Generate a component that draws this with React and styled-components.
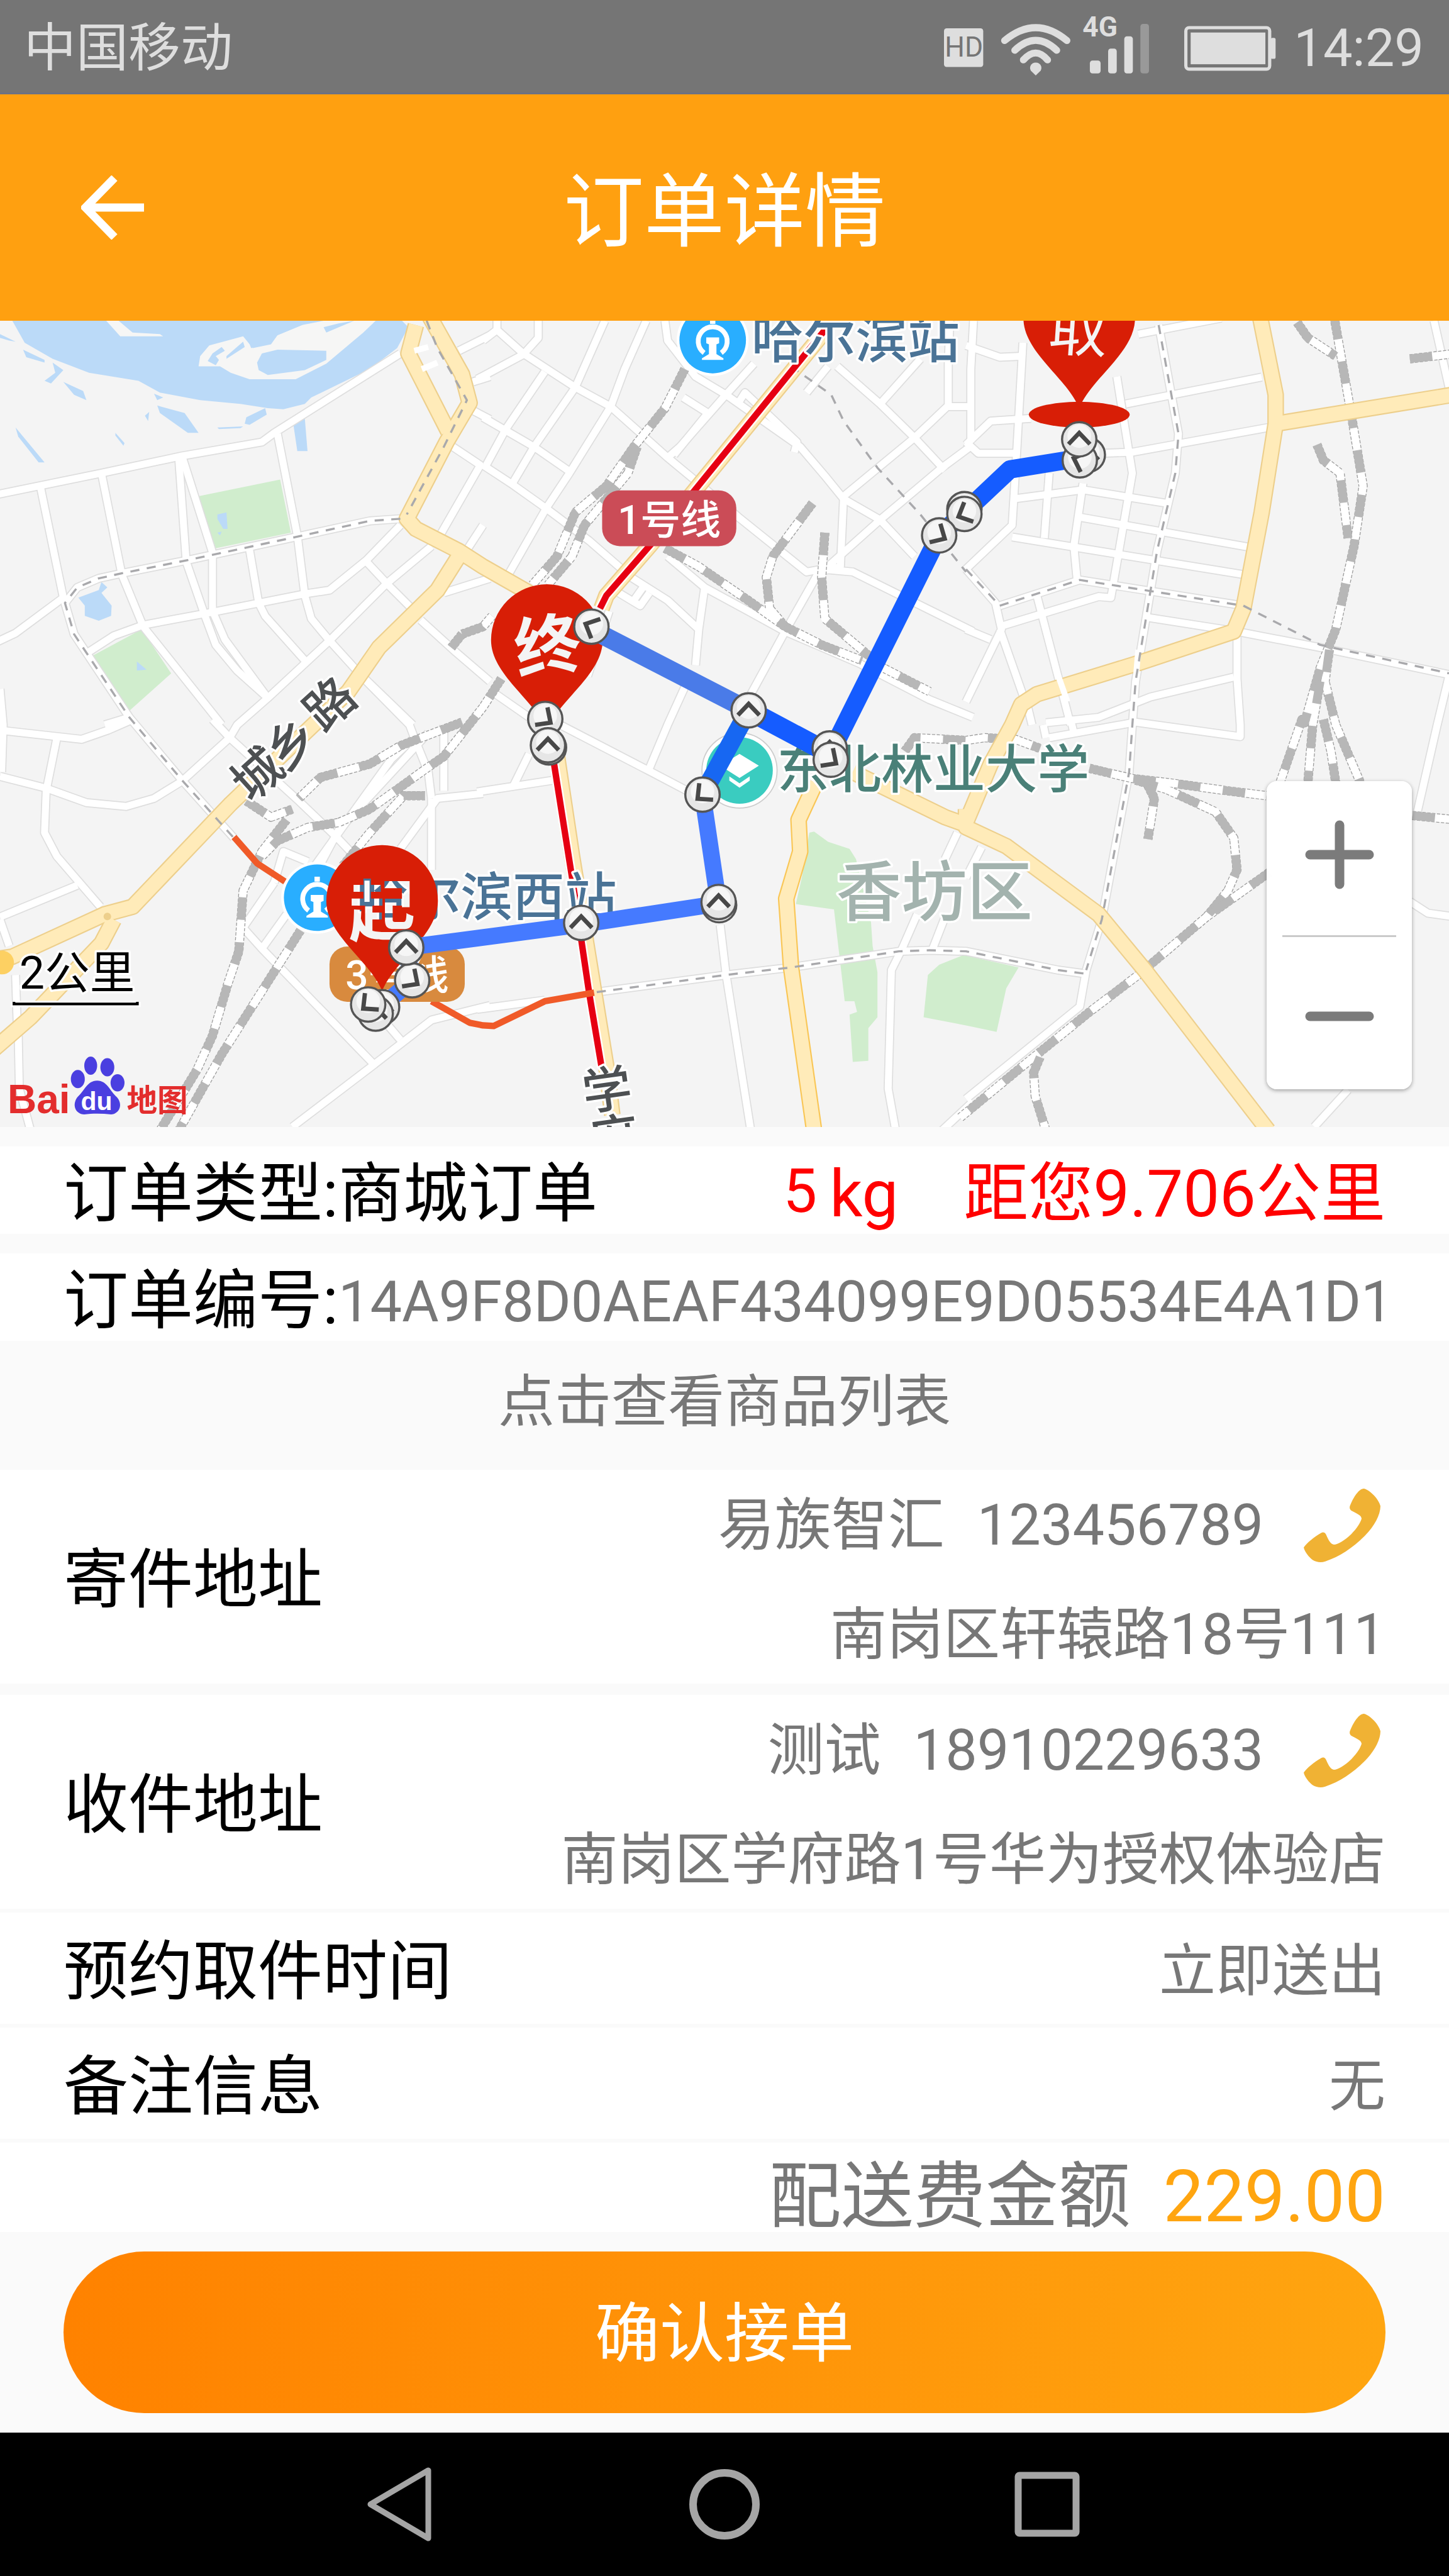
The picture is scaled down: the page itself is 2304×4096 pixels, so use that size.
import React, { useState } from "react";
import styled, { createGlobalStyle } from "styled-components";

const GlobalStyle = createGlobalStyle`
  *, *::before, *::after { box-sizing: border-box; }
  html, body { margin: 0; padding: 0; background: #000; }
  body { font-family: Roboto, "Noto Sans CJK SC", sans-serif; color: #000; }
  button { font: inherit; color: inherit; border: 0; padding: 0; background: none; cursor: pointer; }
  a { color: inherit; text-decoration: none; }
  p, h1, h2, dl, dt, dd { margin: 0; font-weight: 400; }
`;

const Screen = styled.div`
  display: flex;
  flex-direction: column;
  width: 100%;
  min-height: 100vh;
  background: #fafafa;
`;

/* ---------- status bar ---------- */

const StatusBar = styled.div`
  display: flex;
  align-items: center;
  justify-content: space-between;
  height: 150px;
  padding: 6px 40px 0 38px;
  background: #757575;
  border-bottom: 3px solid #6d7182;
  color: #dedede;
  font-size: 83px;
  line-height: 150px;
`;

const StatusIcons = styled.div`
  display: flex;
  align-items: center;
  svg { display: block; height: 147px; }
`;

const Clock = styled.span`
  margin-left: 28px;
`;

/* ---------- header ---------- */

const Header = styled.header`
  display: grid;
  grid-template-columns: 1fr auto 1fr;
  align-items: center;
  height: 360px;
  padding: 0 101px;
  background: #ffa010;
  color: #fff;
`;

const BackButton = styled.button`
  display: flex;
  justify-self: start;
  padding: 28px;
  svg { display: block; width: 100px; height: 102px; }
`;

const Title = styled.h1`
  padding-top: 16px;
  font-size: 128px;
  line-height: 150px;
`;

/* ---------- map ---------- */

const MapBox = styled.section`
  position: relative;
  overflow: hidden;
  background: #f4f4f4;
  > svg { display: block; width: 100%; height: auto; }
`;

const ZoomPanel = styled.div`
  position: absolute;
  right: 59px;
  bottom: 60px;
  display: flex;
  flex-direction: column;
  width: 231px;
  padding: 0 25px;
  border-radius: 16px;
  background: rgba(255, 255, 255, 0.98);
  box-shadow: 0 2px 6px rgba(0, 0, 0, 0.35);
`;

const ZoomButton = styled.button`
  display: flex;
  align-items: center;
  justify-content: center;
  height: 245px;
  padding-bottom: 10px;
  & + & {
    padding: 10px 0 0;
    border-top: 3px solid #cacaca;
  }
  svg { display: block; width: 110px; height: 110px; }
`;

/* ---------- order rows ---------- */

const Summary = styled.dl`
  display: flex;
  align-items: center;
  height: 139px;
  margin-top: 31px;
  padding: 12px 101px 0;
  background: #fff;
  font-size: 103px;
  line-height: 139px;
  white-space: nowrap;
`;

const OrderNumber = styled.dd`
  flex: 1;
  padding-top: 4px;
  text-align: right;
  font-size: 90px;
  color: #777;
`;

const Measures = styled.div`
  display: flex;
  align-items: center;
  margin-left: auto;
  color: #f00;
`;

const Weight = styled.span`
  display: flex;
  align-items: flex-start;
  gap: 20px;
  margin-right: 104px;
`;

const Kilos = styled.span`
  font-size: 96px;
  line-height: 130px;
`;

const ProductsButton = styled.button`
  height: 205px;
  padding-bottom: 8px;
  font-size: 90px;
  line-height: 120px;
  color: #777;
`;

const Row = styled.section`
  display: flex;
  align-items: center;
  justify-content: space-between;
  height: ${(p) => p.$height}px;
  margin-bottom: ${(p) => p.$gap}px;
  padding: 12px 101px 0;
  background: #fff;
`;

const Label = styled.h2`
  font-size: 103px;
  line-height: 139px;
`;

const Value = styled.p`
  font-size: 90px;
  line-height: 120px;
  color: #777;
`;

const Contact = styled.div`
  display: flex;
  flex-direction: column;
  align-items: flex-end;
  gap: 54px;
`;

const Person = styled.div`
  display: flex;
  align-items: center;
`;

const PhoneNumber = styled(Value)`
  margin: 0 64px 0 52px;
`;

const CallLink = styled.a`
  display: block;
  margin-right: 8px;
  svg { display: block; width: 122px; height: 118px; }
`;

const Fee = styled.section`
  display: flex;
  align-items: flex-end;
  justify-content: flex-end;
  gap: 52px;
  height: 142px;
  padding: 0 101px;
  background: #fff;
  color: #777;
  font-size: 115px;
  line-height: 112px;
`;

const Amount = styled.strong`
  font-weight: 400;
  color: #ffa510;
`;

const Footer = styled.footer`
  padding: 31px 101px;
`;

const ConfirmButton = styled.button`
  display: block;
  width: 100%;
  height: 257px;
  padding-top: 6px;
  border-radius: 129px;
  background: linear-gradient(90deg, #ff8200, #ffa510);
  color: #fff;
  font-size: 103px;
  line-height: 139px;
`;

/* ---------- navigation bar ---------- */

const NavBar = styled.nav`
  display: flex;
  flex: 1;
  align-items: center;
  justify-content: center;
  gap: 393px;
  min-height: 229px;
  background: #000;
`;

const NavButton = styled.button`
  display: block;
  svg { display: block; width: 120px; height: 120px; }
`;

/* ---------- map data ---------- */

const SHEETS = {
  A: [0, 590, 0.574, 0.4847],
  B: [900, 590, 0.574, 0.4847],
  C: [1800, 590, 0.574, 0.4847],
  D: [0, 1340, 0.574, 0.4911],
  E: [900, 1340, 0.574, 0.4911],
  F: [1800, 1340, 0.574, 0.4911],
};

function trace(source) {
  let sheet = SHEETS.A;
  const points = [];
  source.split(/\s+/).forEach((token) => {
    if (SHEETS[token]) {
      sheet = SHEETS[token];
      return;
    }
    const [x, y] = token.split(",").map(Number);
    points.push([Math.round(sheet[0] + x * sheet[2]), Math.round(sheet[1] + y * sheet[3])]);
  });
  return points.map((p) => p.join(",")).join(" ");
}

const STREETS = [
  "A -20,684 330,600 590,535 850,480 890,445 1300,140",
  "A 130,650 205,1080 50,1215 -20,1255",
  "A 330,600 395,990 465,1190 720,1568",
  "A 580,540 605,940 665,1150 700,1260 770,1360 870,1465",
  "A 592,540 690,905 690,1130 730,1240 870,1465",
  "A 900,450 965,840 990,1070 1010,1160 1070,1245 1190,1400 1330,1568 D 1345,70 1390,200 1400,300",
  "A 810,895 840,1100 860,1150 990,1320",
  "A 285,1290 370,1225 465,1185 690,1135 990,1065 1070,1050 1190,935 1300,800",
  "A 1400,880 1255,1025 1070,1245 870,1465 770,1568 D 745,70 590,235 500,300 410,330 280,315 150,260 0,215",
  "A 1430,835 1560,570 1470,500",
  "A 1185,935 1260,1030 1340,1125",
  "A 1365,1165 1480,1290 1590,1400",
  "A 1185,1390 1340,1568",
  "A 1520,890 1568,800",
  "A 1440,1060 1590,1005",
  "A 1490,130 1590,70",
  "A 1535,250 1590,230",
  "A 1535,360 1590,395",
  "A 340,1568 420,1540",
  "A 0,1430 10,1568 D 5,200",
  "D 690,0 745,70 970,310 1100,455 1160,530",
  "D 185,70 150,270 145,430 185,520 325,710",
  "D 0,40 265,75 350,40 430,0",
  "D 0,750 250,630",
  "D 0,760 30,860",
  "D 50,970 55,1150",
  "D 60,1200 62,1400 100,1560",
  "D 1390,50 1100,420 1040,550",
  "D 1345,70 1270,150 970,640",
  "D 1568,280 1420,300 1300,490",
  "D 1400,300 1400,570",
  "D 1440,20 1440,270",
  "D 890,620 920,500 1000,540",
  "D 890,620 790,790 850,870 1215,1310 950,1545",
  "D 850,870 930,740",
  "D 1215,1310 1400,1140 1590,1085",
  "D 1300,1215 1260,1160",
  "B 45,15 45,50 130,140 300,270 415,345 600,540 700,640 830,770 1050,980 1100,970 1200,980 1590,1210",
  "B -20,240 130,145 180,80 180,15",
  "B 45,50 0,90",
  "B 530,15 460,200 415,345 280,600 205,735 85,985",
  "B 395,15 300,270 165,500 90,650",
  "B 200,210 75,430 10,570",
  "B 0,385 165,500 290,600",
  "B 0,570 90,640 210,740 345,860 480,1000 600,1090 700,1200",
  "B 590,15 600,90 690,230 790,300 1030,500 1110,610 1170,700 1290,780 1400,920",
  "B 880,180 780,310 640,500 600,540",
  "B 650,310 730,370 620,530",
  "B 830,330 850,290 1020,480 1010,520",
  "B 1150,190 1290,335 1400,465 1500,590",
  "B 1420,160 1290,335",
  "B 1120,190 1050,290",
  "B 1515,15 1510,180 1510,340 1400,465 1170,690 1160,960 1090,980 980,1210 870,1450",
  "B 1590,345 1510,345",
  "B 1590,490 1490,580 1290,780 1110,970",
  "B 720,1040 700,1200 690,1340",
  "B 660,1410 600,1568 E 540,185",
  "B 440,1060 510,1110 540,1060",
  "B 490,1090 520,1040",
  "B 980,1210 860,1130 720,1040 600,920",
  "B 980,1210 1220,1330 1450,1470 1590,1540",
  "B 30,1440 150,1540",
  "B 410,1130 340,1380",
  "C 25,15 15,200 15,480",
  "C 185,100 165,500 150,800 0,970",
  "C 0,110 110,155 190,150",
  "C 0,490 80,400 210,390",
  "C 0,480 40,525 160,525",
  "C 560,65 830,5",
  "C 520,335 960,232",
  "C 440,525 540,520 980,425",
  "C 490,230 540,600 470,1080 430,1075 110,1190",
  "C 155,700 380,665 650,715",
  "C 380,640 350,880 360,1010",
  "C 270,600 255,850",
  "C 370,770 920,885",
  "C 150,845 900,990",
  "C 590,1155 880,1210 1150,1270 1590,1380",
  "C 230,1070 340,1568",
  "C 110,1200 190,1470",
  "C 0,970 95,1100 115,1200 0,1480",
  "C 0,1200 80,1240",
  "C 880,1230 880,1390 890,1568 F 890,65 550,10 270,70",
  "C 870,1385 600,1460 430,1540 260,1560",
  "C 200,1500 215,1568",
  "C 1520,15 1568,270",
  "C 1568,1380 1530,1568 F 1465,350",
  "F 250,20 260,70",
  "F 340,0 350,50",
  "F 390,950 370,1090 0,1440",
  "F 1440,690 1500,735 1590,750",
  "F 1240,1405 1130,1545",
  "F 50,485 0,600",
  "E 770,780 790,970 870,1560",
  "E -20,275 230,230",
  "E 250,20 540,195 680,280",
  "E 150,130 100,250",
  "E -20,1100 200,1065",
  "E 1540,430 1500,530",
  "E 1410,740 1360,870 1325,950 1315,1400 1340,1560",
  "E 1500,750 1460,870",
  "E 1490,1560 1590,1450",
];

// Streets carrying a line that is still under construction.
const PLANNED = [
  "A 1300,775 1200,785 960,845 610,935 400,985 320,1005 250,1040 210,1100 240,1220 420,1540 D 590,230 760,450",
  "E 370,1035 790,970 1000,940 1350,880 1450,875 1568,880 F 0,880 300,950 390,965",
  "C 625,30 690,450 680,600 620,900 550,1400 540,1568 F 530,200 440,760 390,950",
  "C 110,1110 370,1010 900,1110",
];

const PLANNED_OVERLAY = [
  "A 1385,15 1420,120 1515,320 1440,500 1320,760",
  "B 1000,190 1130,300 1170,400 1280,580 1420,760 1568,980",
  "C 0,970 110,1110",
  "C 900,1110 1150,1260 1568,1370",
];

const AVENUES = [
  "A 1350,30 1325,140 1455,440",
  "A 1395,0 1500,220 1525,330 1450,480 1320,775 1350,815 1490,900 1568,960 B 150,1060",
  "A 1500,900 1420,1050 1230,1270 1130,1440 D 990,50 750,320 430,710 340,740 40,900 -20,910",
  "D 370,760 330,850 100,1130 -20,1250",
  "C 955,0 1005,300 1005,410 960,750 900,1120 870,1210 560,1330 230,1450 180,1490 150,1568 F 80,170 0,390",
  "C 1005,410 1590,298",
  "E 1200,200 1500,370 1568,400 F 0,410 130,480 430,740 580,950 980,1560",
  "E 1568,400 1568,340",
  "B 1120,40 540,880 400,1070 385,1120",
  "E 235,100 290,520 400,1320 420,1500",
];

const BRIGHT_AVENUES = ["E 1080,240 1025,380 1030,500 985,680 1000,940 1075,1560"];

const RAILWAYS = [
  "B 655,200 590,350 490,500 400,650 300,750 240,920 160,1030",
  "B 500,500 470,600 330,800 290,920 210,1030",
  "B 590,890 700,960 860,1090 980,1190 1100,1260 1230,1320",
  "B 1070,715 940,920 920,1000 930,1120 980,1190",
  "B 1110,830 1100,1000 1110,1160 1300,1350 1450,1440",
  "B 60,1390 0,1500 D 1440,140 1380,190 1200,340 1100,390 1000,410 900,460 850,520",
  "A 1500,1220 1568,1190 B 30,1150",
  "A 1500,1220 1465,1270",
  "D 800,310 880,370 950,340",
  "D 1500,10 1300,100 1200,170 1040,220 970,300",
  "D 930,380 850,500 790,650 775,880 740,1000 690,1200 640,1330 520,1560",
  "D 1380,290 1310,290 1200,430 1110,560",
  "D 975,800 830,1070 720,1270 580,1560",
  "C 1075,20 1110,80 1200,150",
  "C 1195,0 1225,200 1255,400 1290,650 1260,880 1200,1200 1150,1350 1100,1560 F 1090,0 1020,240",
  "C 1140,490 1160,550 1215,600 1240,850",
  "C 1180,1280 1165,1400 1200,1568 F 1280,240",
  "C 1150,1400 1125,1568 F 1110,240",
  "F 1160,0 1185,120 1200,240",
  "C 1440,160 1590,140",
  "E 1370,120 1400,70 1568,80 F 60,70 160,75 240,110",
  "F 400,185 540,225 660,240 850,270 975,290",
  "F 550,230 650,265 810,350 870,450 880,570 850,650 780,750",
  "F 590,250 612,300 590,455",
  "F 1450,365 1590,380",
  "F 985,580 780,750 560,970 400,1110 180,1320 -20,1510",
  "F 240,1280 220,1340 225,1430 260,1560",
];

const METRO_1 = ["B 1112,48 540,880 400,1070 380,1120", "E 228,150 290,600 345,1040 385,1320"];
const METRO_3 = ["D 760,445 835,545 925,615", "D 1400,1070 1525,1150 1568,1160 E 35,1162 200,1070 360,1037"];

const WATER = [
  "A 40,15 80,100 170,160 290,215 450,245 520,290 650,320 780,335 870,350 920,355 990,335 1010,310 1200,200 1290,120 1325,40 1305,15",
  "A 950,390 990,390 998,515 965,515",
  "A 510,340 600,370 645,445 610,445 520,370",
  "A 800,385 860,350 865,375 810,415 795,410",
  "A 255,1080 320,1050 330,1020 348,1040 330,1060 362,1110 360,1150 320,1168 275,1150 275,1110",
  "A 0,65 50,95 30,90 0,80",
  "A 75,125 145,165 145,175 85,155",
  "A 170,175 205,205 165,255 145,245 180,215",
  "A 205,250 270,285 280,320 240,300",
  "A 50,425 145,560 125,560 60,460",
  "A 375,445 405,485 400,495 375,455",
  "A 705,425 790,420 780,428 710,432",
  "A 500,295 530,310 510,320",
  "A 470,380 485,365 480,400",
];

const ISLANDS = [
  "A 345,15 390,75 530,75 520,65 430,60 385,15",
  "A 645,190 650,150 680,110 790,75 820,120 880,105 900,70 980,30 1050,15 1220,15 1180,60 1060,180 960,240 810,240 750,215 715,190",
];

const LAKES = [
  "A 835,175 850,140 900,125 1060,130 1060,165 990,205 870,222 840,205",
  "A 690,140 720,115 730,130 700,150 710,165 700,185 675,170",
  "A 735,150 790,95 795,115 735,160",
  "A 780,15 815,120 880,100 900,70 980,30 1010,15",
  "A 1050,40 1100,25 1150,15 1060,60",
];

const PARKS = [
  "A 645,690 910,625 945,830 700,890",
  "A 295,1305 460,1200 555,1370 420,1515",
  "E 1060,430 1075,425 1120,465 1190,490 1210,530 1260,770 1265,860 1280,960 1280,1130 1250,1170 1250,1295 1200,1300 1190,1120 1215,1110 1205,1070 1175,1070 1140,720 1015,700 1035,600",
  "E 1430,1130 1445,970 1480,930 1568,890 F 0,895 170,940 130,1020 100,1185 0,1160",
];

const PONDS = ["A 705,760 735,750 738,815 725,815 705,775", "A 445,1325 475,1355 445,1360", "A 705,830 720,825 715,840"];

const NODES = [
  [2027, 847, 0],
  [2012, 857, -70],
  [2011, 818, 0],
  [1797, 948, 0],
  [1797, 957, -115],
  [1750, 997, 120],
  [1395, 1323, 0],
  [1546, 1394, 0],
  [1548, 1415, 125],
  [1309, 1480, -130],
  [1340, 1686, 0],
  [1339, 1680, 0],
  [1083, 1719, 0],
  [768, 1826, 125],
  [757, 1765, 0],
  [712, 1876, 0],
  [700, 1888, 0],
  [686, 1871, -130],
  [1016, 1339, 125],
  [1023, 1392, 0],
  [1021, 1388, 0],
  [1102, 1167, -65],
];

function Lines({ items, color, width, dash }) {
  return (
    <g fill="none" stroke={color} strokeWidth={width} strokeDasharray={dash} strokeLinejoin="round">
      {items.map((d) => <polyline key={d} points={trace(d)} />)}
    </g>
  );
}

function Areas({ items, color }) {
  return <g fill={color}>{items.map((d) => <polygon key={d} points={trace(d)} />)}</g>;
}

function Pin({ id, x, y, text, size, tilt, drop, weight = 700 }) {
  return (
    <g transform={`translate(${x} ${y})`}>
      <mask id={id} maskUnits="userSpaceOnUse" x="-120" y="-120" width="240" height="300">
        <rect x="-120" y="-120" width="240" height="300" fill="#fff" />
        <text y={drop} fontSize={size} fontWeight={weight} textAnchor="middle" fill="#000" transform={`rotate(${tilt})`}>{text}</text>
      </mask>
      <path mask={`url(#${id})`} fill="#d81e06" d="M0,168 C-22,112 -104,64 -104,0 A104,104 0 0 1 104,0 C104,64 22,112 0,168Z" />
    </g>
  );
}

function Station({ x, y }) {
  return (
    <g transform={`translate(${x} ${y})`}>
      <circle r="67" fill="#fff" />
      <circle r="62" fill="#29aeff" />
      <path d="M-16,24 A27,27 0 1 1 16,24" fill="none" stroke="#fff" strokeWidth="9" />
      <path d="M-12,-5 H12 V6 L7,8 V26 L20,34 V37 H-20 V34 L-7,26 V8 L-12,6Z M-5,-39 H5 V-30 H-5Z" fill="#fff" />
    </g>
  );
}

function CityMap() {
  const halo = { stroke: "#fff", strokeWidth: 8, paintOrder: "stroke", strokeLinejoin: "round" };
  return (
    <svg viewBox="0 597 2700 1502" role="img" aria-label="配送路线地图" fontFamily='Roboto, "Noto Sans CJK SC", sans-serif'>
      <Areas items={WATER} color="#bbdaf8" />
      <Areas items={ISLANDS} color="#f6f6f5" />
      <Areas items={LAKES} color="#bbdaf8" />
      <Areas items={PARKS} color="#d0edcd" />
      <Areas items={PONDS} color="#bbdaf8" />

      <Lines items={STREETS} color="#dedede" width="17" />
      <Lines items={PLANNED} color="#dedede" width="17" />
      <Lines items={STREETS} color="#fff" width="13" />
      <Lines items={PLANNED} color="#fff" width="13" />
      <Lines items={RAILWAYS} color="#9a9a9a" width="17" dash="6 3" />
      <Lines items={RAILWAYS} color="#fff" width="14" />
      <Lines items={RAILWAYS} color="#b7b7b7" width="16" dash="42 42" />

      <Lines items={AVENUES} color="#edcf8c" width="31" />
      <Lines items={BRIGHT_AVENUES} color="#f9c656" width="31" />
      <Lines items={[...AVENUES, ...BRIGHT_AVENUES]} color="#ffebb9" width="26" />
      <circle cx="200" cy="1707" r="7" fill="#edcf8c" />
      <circle cx="4" cy="1793" r="22" fill="#fdd062" />
      <Lines items={["C 560,1280 550,1400", "C 300,1380 330,1480", "A 1345,130 1390,115", "A 1370,200 1420,175"]} color="#fff" width="11" />
      <Lines items={[...PLANNED, ...PLANNED_OVERLAY]} color="#a9a9ac" width="4" dash="17 14" />

      <Lines items={METRO_1} color="#fff" width="18" />
      <Lines items={METRO_1} color="#e60012" width="12" />
      <Lines items={METRO_3} color="#f05a28" width="12" />

      <g fontWeight="500" fontSize="97" {...halo}>
        <text x="1400" y="666" fill="#4a7396">哈尔滨站</text>
        <text x="664" y="1706" fill="#4a7396">哈尔滨西站</text>
        <text x="1448" y="1468" fill="#4a8078">东北林业大学</text>
      </g>
      <text x="1558" y="1706" fontSize="122" fontWeight="500" fill="#a3b3ae" {...halo}>香坊区</text>
      <g fontSize="92" fontWeight="500" fill="#4d5052" textAnchor="middle" {...halo}>
        <text transform="translate(479 1441) rotate(-42)" y="34">城</text>
        <text transform="translate(542 1384) rotate(-42)" y="34">乡</text>
        <text transform="translate(614 1310) rotate(-42)" y="34">路</text>
        <text transform="translate(1131 2029) rotate(-8)" y="34">学</text>
        <text transform="translate(1144 2119) rotate(-8)" y="34">府</text>
      </g>

      <Station x={1328} y={633} />
      <Station x={591} y={1672} />
      <g transform="translate(1378 1435)">
        <circle r="70" fill="#fff" stroke="#ccc" strokeWidth="2" />
        <circle r="62" fill="#3accc0" />
        <path d="M0,-31 L36,-9 L0,14 L-36,-9Z M-19,11 L0,24 L19,11 V19 L0,32 L-19,19Z" fill="#fff" />
      </g>

      <rect x="1122" y="913" width="250" height="104" rx="33" fill="#cb4c57" />
      <rect x="614" y="1763" width="252" height="103" rx="33" fill="#d88a3e" />
      <g fontSize="75" fontWeight="500" fill="#fff" textAnchor="middle">
        <text x="1247" y="994">1号线</text>
        <text x="740" y="1843">3号线</text>
      </g>

      <ellipse cx="2011" cy="772" rx="94" ry="24" fill="#d81e06" />
      <Pin id="pin-pickup" x={2011} y={592} text="取" size={110} tilt={4} drop={62} weight={400} />
      <Pin id="pin-end" x={1019} y={1192} text="终" size={124} tilt={-8} drop={56} />
      <Pin id="pin-start" x={712} y={1678} text="起" size={124} tilt={0} drop={64} />

      <g fill="none" strokeWidth="31" strokeLinejoin="round">
        <polyline points="2011,853 1882,874 1811,941 1750,997 1547,1404" stroke="#155cff" strokeWidth="34" />
        <polyline points="1547,1404 1395,1323" stroke="#155cff" strokeWidth="38" />
        <polyline points="1102,1172 1395,1323" stroke="#4a7be8" strokeWidth="35" />
        <polyline points="1395,1323 1309,1480" stroke="#1767f2" strokeWidth="34" />
        <polyline points="1309,1480 1339,1683 1083,1722 757,1765 768,1826 700,1884" stroke="#457aff" />
      </g>

      {NODES.map(([x, y, turn]) => (
        <g key={`${x}-${y}`} transform={`translate(${x} ${y})`}>
          <circle r="32" fill="#e6e6e6" stroke="#555" strokeWidth="4" />
          <circle cy="-6" r="22" fill="#f6f6f6" />
          <polyline points="-20,9 0,-12 20,9" transform={`rotate(${turn})`} fill="none" stroke="#484848" strokeWidth="8" />
        </g>
      ))}

      <text x="36" y="1842" fontSize="84" fill="#000" {...halo}>2公里</text>
      <path d="M26,1866 V1870 H256 V1866" fill="none" stroke="#fff" strokeWidth="12" />
      <path d="M26,1866 V1870 H256 V1866" fill="none" stroke="#000" strokeWidth="5" />

      <g fontWeight="700" fill="#e32d2d">
        <text x="14" y="2074" fontSize="75" fontFamily='"Liberation Sans", sans-serif'>Bai</text>
        <text x="236" y="2070" fontSize="57">地图</text>
      </g>
      <g fill="#4a3fe0">
        <path d="M181,2013 C200,2013 205,2033 218,2044 C230,2058 222,2075 207,2076 C190,2074 172,2074 157,2076 C140,2075 134,2058 144,2044 C157,2033 162,2013 181,2013Z" />
        <ellipse cx="145" cy="2010" rx="13" ry="17" />
        <ellipse cx="169" cy="1985" rx="12" ry="17" />
        <ellipse cx="200" cy="1988" rx="13" ry="17" />
        <ellipse cx="219" cy="2017" rx="13" ry="16" />
      </g>
      <text x="180" y="2068" fontSize="48" fontWeight="700" fill="#fff" textAnchor="middle" fontFamily='"Liberation Sans", sans-serif'>du</text>
    </svg>
  );
}

/* ---------- icons ---------- */

const HdIcon = () => (
  <svg viewBox="1758 0 73 172" aria-label="HD">
    <rect x="1758" y="49" width="73" height="72" rx="5" fill="#dedede" />
    <text x="1795" y="102" fontSize="52" textAnchor="middle" fill="#757575" fontFamily="Roboto, sans-serif">HD</text>
  </svg>
);

const WifiIcon = () => (
  <svg viewBox="1831 0 177 172" aria-label="Wi-Fi">
    <g fill="none" stroke="#dedede" strokeWidth="13" strokeLinecap="round">
      <path d="M1870,72 Q1928,24 1986,72" />
      <path d="M1889,90 Q1928,53 1967,90" />
      <path d="M1905,108 Q1928,82 1950,108" />
    </g>
    <path d="M1928,113 C1937,113 1941,122 1937,128 L1928,137 L1919,128 C1915,122 1919,113 1928,113Z" fill="#dedede" />
  </svg>
);

const SignalIcon = () => (
  <svg viewBox="2008 0 135 172" aria-label="4G">
    <text x="2048" y="64" fontSize="52" fontWeight="700" textAnchor="middle" fill="#dedede" fontFamily="Roboto, sans-serif">4G</text>
    <g fill="#dedede">
      <rect x="2029" y="109" width="20" height="24" rx="5" />
      <rect x="2063" y="87" width="16" height="46" rx="5" />
      <rect x="2093" y="64" width="16" height="69" rx="5" />
      <rect x="2123" y="41" width="16" height="92" rx="5" fill="#999" />
    </g>
  </svg>
);

const BatteryIcon = () => (
  <svg viewBox="2143 0 233 172" aria-label="电池">
    <rect x="2208" y="48" width="156" height="77" rx="6" fill="none" stroke="#dedede" strokeWidth="6" />
    <rect x="2217" y="57" width="139" height="59" fill="#dedede" />
    <rect x="2366" y="67" width="9" height="39" rx="3" fill="#dedede" />
  </svg>
);

const PhoneIcon = () => (
  <svg viewBox="60 43 427 412" aria-hidden="true">
    <path fill="#f0b234" d="M398,43 C430,52 478,100 487,140 C486,190 455,250 400,305 C330,375 260,420 180,448 C155,456 130,452 110,440 C90,425 65,395 60,370 C75,345 120,310 158,288 C170,283 180,288 185,300 C200,335 212,352 228,354 C250,352 290,330 325,295 C355,265 375,235 382,210 C380,195 370,188 330,168 C315,160 312,148 320,132 C335,95 355,65 372,52 C380,45 390,42 398,43Z" />
  </svg>
);

/* ---------- screen ---------- */

const CONTACTS = [
  { label: "寄件地址", name: "易族智汇", phone: "123456789", address: "南岗区轩辕路18号111", gap: 18 },
  { label: "收件地址", name: "测试", phone: "18910229633", address: "南岗区学府路1号华为授权体验店", gap: 6 },
];

const DETAILS = [
  { label: "预约取件时间", value: "立即送出" },
  { label: "备注信息", value: "无" },
];

export default function App() {
  const [, setZoom] = useState(12);
  return (
    <>
      <GlobalStyle />
      <Screen>
        <StatusBar>
          <span>中国移动</span>
          <StatusIcons>
            <HdIcon />
            <WifiIcon />
            <SignalIcon />
            <BatteryIcon />
            <Clock>14:29</Clock>
          </StatusIcons>
        </StatusBar>

        <Header>
          <BackButton type="button" aria-label="返回">
            <svg viewBox="0 0 100 102">
              <path d="M100,51 H12 M53,4 L7,51 L53,98" fill="none" stroke="#fff" strokeWidth="13" />
            </svg>
          </BackButton>
          <Title>订单详情</Title>
        </Header>

        <MapBox>
          <CityMap />
          <ZoomPanel>
            <ZoomButton type="button" aria-label="放大" onClick={() => setZoom((z) => z + 1)}>
              <svg viewBox="0 0 110 110"><path d="M8,55 H102 M55,8 V102" stroke="#7b7b7b" strokeWidth="15" strokeLinecap="round" /></svg>
            </ZoomButton>
            <ZoomButton type="button" aria-label="缩小" onClick={() => setZoom((z) => z - 1)}>
              <svg viewBox="0 0 110 110"><path d="M8,55 H102" stroke="#7b7b7b" strokeWidth="15" strokeLinecap="round" /></svg>
            </ZoomButton>
          </ZoomPanel>
        </MapBox>

        <Summary>
          <dt>订单类型:</dt>
          <dd>商城订单</dd>
          <Measures as="dd">
            <Weight><Kilos>5</Kilos><span>kg</span></Weight>
            <span>距您9.706公里</span>
          </Measures>
        </Summary>
        <Summary>
          <dt>订单编号:</dt>
          <OrderNumber>14A9F8D0AEAF434099E9D05534E4A1D1</OrderNumber>
        </Summary>

        <ProductsButton type="button">点击查看商品列表</ProductsButton>

        {CONTACTS.map((c) => (
          <Row key={c.label} $height={340} $gap={c.gap}>
            <Label>{c.label}</Label>
            <Contact>
              <Person>
                <Value>{c.name}</Value>
                <PhoneNumber>{c.phone}</PhoneNumber>
                <CallLink href={`tel:${c.phone}`} aria-label={`拨打 ${c.phone}`}><PhoneIcon /></CallLink>
              </Person>
              <Value>{c.address}</Value>
            </Contact>
          </Row>
        ))}

        {DETAILS.map((d) => (
          <Row key={d.label} $height={177} $gap={6}>
            <Label>{d.label}</Label>
            <Value>{d.value}</Value>
          </Row>
        ))}

        <Fee>
          <span>配送费金额</span>
          <Amount>229.00</Amount>
        </Fee>

        <Footer>
          <ConfirmButton type="button">确认接单</ConfirmButton>
        </Footer>

        <NavBar>
          <NavButton type="button" aria-label="返回">
            <svg viewBox="0 0 120 120"><path d="M102,6 V114 L10,60Z" fill="none" stroke="#a5a5a5" strokeWidth="9" strokeLinejoin="round" /></svg>
          </NavButton>
          <NavButton type="button" aria-label="主屏幕">
            <svg viewBox="0 0 120 120"><circle cx="60" cy="60" r="50" fill="none" stroke="#a5a5a5" strokeWidth="12" /></svg>
          </NavButton>
          <NavButton type="button" aria-label="最近任务">
            <svg viewBox="0 0 120 120"><rect x="14" y="14" width="92" height="92" rx="2" fill="none" stroke="#a5a5a5" strokeWidth="11" /></svg>
          </NavButton>
        </NavBar>
      </Screen>
    </>
  );
}
